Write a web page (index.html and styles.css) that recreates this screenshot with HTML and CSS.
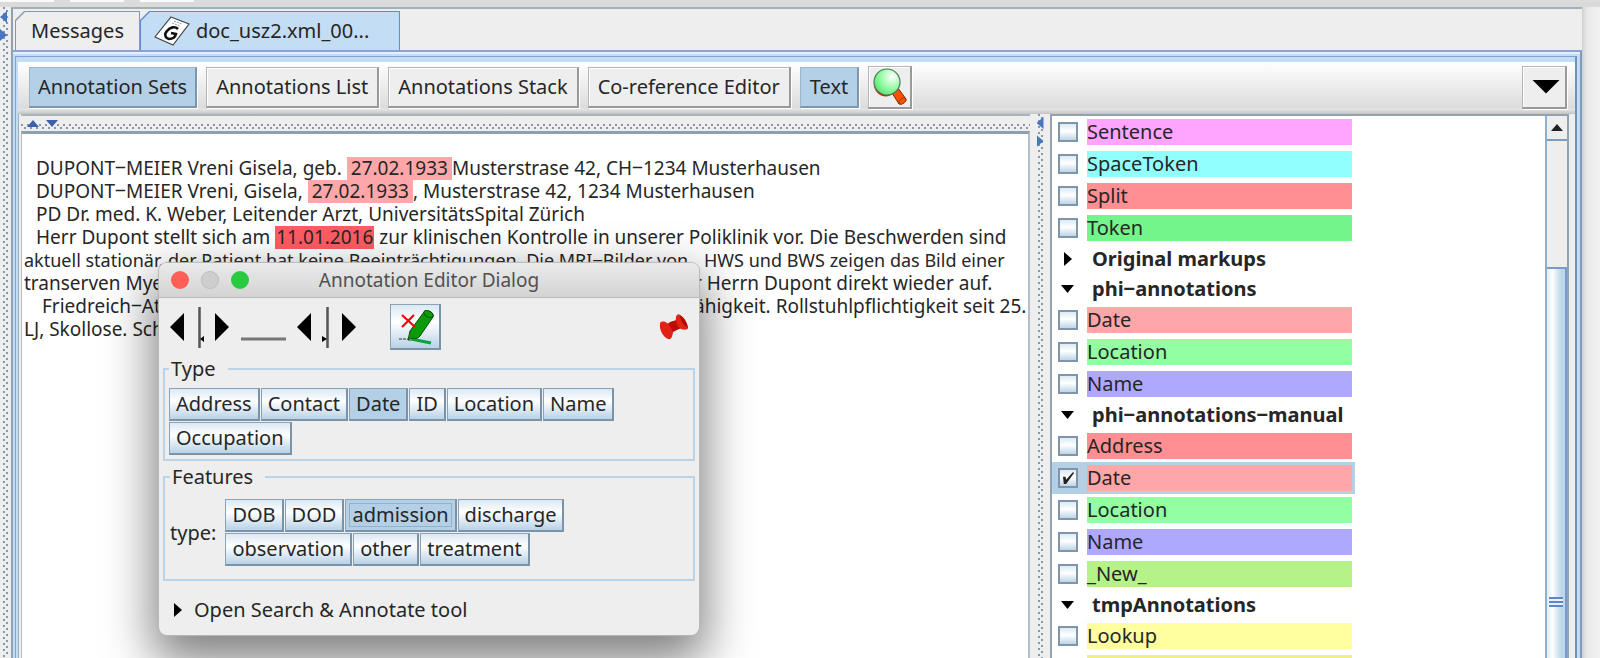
FILE: index.html
```html
<!DOCTYPE html>
<html lang="de">
<head>
<meta charset="utf-8">
<title>Annotation Editor</title>
<link rel="stylesheet" href="styles.css">
</head>
<body>
<div class="app">
  <div class="topstrip"><i></i><i></i><i></i></div>
  <div class="workspace">
    <div class="divider divider-v divider-left"><span class="arr arr-left"></span><span class="arr arr-right"></span></div>
    <main class="main">
      <nav class="tabs">
        <button class="tab" type="button">Messages</button>
        <button class="tab tab-active" type="button">
          <svg class="tab-icon" width="36" height="30" viewBox="0 0 36 30"><path d="M17 1 35 8 19 29 1 21Z" fill="#fff" stroke="#444" stroke-width="1.2"/><path d="m20 5 8 3M18 7l8 3" stroke="#999" stroke-width="1" stroke-dasharray="2 1"/><path d="M24 13c-3-3-8-2-11 2-3 3-2 7 2 8 4 0 6-1 7-5l-5-1" fill="none" stroke="#111" stroke-width="2.6"/></svg>
          doc_usz2.xml_00...
        </button>
      </nav>
      <div class="frame">
        <div class="frame-inner">
          <header class="toolbar">
            <button class="tool tool-on" type="button">Annotation Sets</button>
            <button class="tool" type="button">Annotations List</button>
            <button class="tool" type="button">Annotations Stack</button>
            <button class="tool" type="button">Co-reference Editor</button>
            <button class="tool tool-on" type="button">Text</button>
            <button class="tool tool-icon" type="button" aria-label="Search">
              <svg width="36" height="38" viewBox="0 0 36 38"><defs><radialGradient id="lens" cx=".7" cy=".3" r=".8"><stop offset="0" stop-color="#fff"/><stop offset=".6" stop-color="#8efba0"/><stop offset="1" stop-color="#57e070"/></radialGradient></defs><path d="M2 18c2 10 12 13 19 8l-2-3Z" fill="#d22400"/><path d="m20 25 6-5 8 11c0 3-5 6-7 5Z" fill="#ff5200" stroke="#7a3000" stroke-width="1"/><ellipse cx="30.500" cy="33" rx="4" ry="2.500" transform="rotate(-38 30.500 33)" fill="#ff5200" stroke="#7a3000" stroke-width=".8"/><circle cx="15" cy="14" r="13" fill="url(#lens)" stroke="#4a7a52" stroke-width="1.2"/></svg>
            </button>
            <button class="tool tool-menu" type="button" aria-label="More"><span></span></button>
          </header>
          <div class="content">
            <section class="document">
              <div class="divider divider-h"><span class="arr arr-up"></span><span class="arr arr-down"></span></div>
              <div class="text">
                <p class="in1">DUPONT‒MEIER Vreni Gisela, geb. <mark>27.02.1933</mark>Musterstrase 42, CH‒1234 Musterhausen</p>
                <p class="in1">DUPONT‒MEIER Vreni, Gisela, <mark>27.02.1933</mark>, Musterstrase 42, 1234 Musterhausen</p>
                <p class="in1">PD Dr. med. K. Weber, Leitender Arzt, UniversitätsSpital Zürich</p>
                <p class="in1">Herr Dupont stellt sich am <mark class="current">11.01.2016</mark> zur klinischen Kontrolle in unserer Poliklinik vor. Die Beschwerden sind</p>
                <p class="split dense"><span>aktuell stationär, der Patient hat keine Beeinträchtigungen. Die MRI‒Bilder von</span><span>HWS und BWS zeigen das Bild einer</span></p>
                <p class="split"><span>transerven Mye</span><span>r Herrn Dupont direkt wieder auf.</span></p>
                <p class="split"><span class="in2">Friedreich‒Ata</span><span>ähigkeit. Rollstuhlpflichtigkeit seit 25.</span></p>
                <p>LJ, Skollose. Sch</p>
              </div>
            </section>
            <div class="divider divider-v"><span class="arr arr-left"></span><span class="arr arr-right"></span></div>
            <aside class="sets">
              <div class="list">
                <label class="row"><input type="checkbox"><span class="c-pink">Sentence</span></label>
                <label class="row"><input type="checkbox"><span class="c-cyan">SpaceToken</span></label>
                <label class="row"><input type="checkbox"><span class="c-coral">Split</span></label>
                <label class="row"><input type="checkbox"><span class="c-token">Token</span></label>
                <button class="group closed" type="button">Original markups</button>
                <button class="group" type="button">phi‒annotations</button>
                <label class="row"><input type="checkbox"><span class="c-rose">Date</span></label>
                <label class="row"><input type="checkbox"><span class="c-green">Location</span></label>
                <label class="row"><input type="checkbox"><span class="c-violet">Name</span></label>
                <button class="group" type="button">phi‒annotations‒manual</button>
                <label class="row"><input type="checkbox"><span class="c-coral">Address</span></label>
                <label class="row selected"><input type="checkbox" checked><span class="c-rose">Date</span></label>
                <label class="row"><input type="checkbox"><span class="c-green">Location</span></label>
                <label class="row"><input type="checkbox"><span class="c-violet">Name</span></label>
                <label class="row"><input type="checkbox"><span class="c-lime">_New_</span></label>
                <button class="group" type="button">tmpAnnotations</button>
                <label class="row"><input type="checkbox"><span class="c-yellow">Lookup</span></label>
                <label class="row"><input type="checkbox"><span class="c-olive">SpaceToken</span></label>
              </div>
              <div class="scroll">
                <button class="scroll-up" type="button" aria-label="Scroll up"><span></span></button>
                <div class="track"></div>
                <div class="thumb"><span></span></div>
              </div>
            </aside>
          </div>
        </div>
      </div>
    </main>
    <div class="outside"></div>
  </div>

  <div class="dialog" role="dialog" aria-label="Annotation Editor Dialog">
    <div class="titlebar">
      <div class="lights"><button class="red" type="button" aria-label="Close"></button><button class="grey" type="button" aria-label="Minimise"></button><button class="lime" type="button" aria-label="Zoom"></button></div>
      <h1>Annotation Editor Dialog</h1>
    </div>
    <div class="actions">
      <svg width="196" height="44" viewBox="0 0 196 44">
        <path d="M0 22 14 8V36ZM59 22 45 8V36ZM127 22 141 8V36ZM186 22 172 8V36Z" fill="#000"/>
        <path d="M29.500 2V43M157.500 2V43" stroke="#555" stroke-width="2.500"/>
        <path d="M30 34l4-3v6ZM157 34l-5-3v6Z" fill="#000"/>
        <path d="M71 34H116" stroke="#777" stroke-width="3"/>
      </svg>
      <button class="btn eraser" type="button" aria-label="Delete annotation">
        <svg width="44" height="40" viewBox="0 0 44 40"><path d="M6 32h8l4 2" stroke="#333" fill="none" stroke-dasharray="3 1"/><path d="m18 32 20 4" stroke="#0aa33a" stroke-width="3"/><path d="m15 33 2-9L31 5c3-3 11 1 9 5L27 29c-3 4-7 2-8 2Z" fill="#0a9a0a" stroke="#064d06" stroke-width="1"/><ellipse cx="35.500" cy="7" rx="5" ry="3" transform="rotate(30 35.500 7)" fill="#0a9a0a" stroke="#064d06"/><path d="m9 8 13 12M21 8 9 20" stroke="#f00" stroke-width="2.200"/></svg>
      </button>
      <button class="pin" type="button" aria-label="Pin">
        <svg width="30" height="28" viewBox="0 0 30 28"><path d="M11 9 18 7 22 15 14 18Z" fill="#b00a04"/><path d="M1 11c0-3 4-3 7-1 4 2 7 6 6 10-1 3-1 7-5 6C4 24 0 16 1 11Z" fill="#e02316"/><path d="m9 10 9-3 4 8-8 4Z" fill="#bb0d06"/><path d="M17 4c0-2 3-4 4-2 5 3 7 8 8 13 0 2-4 2-7 1-4-3-6-8-5-12Z" fill="#e02316"/><path d="M21 2c4 3 7 7 8 13-5-3-8-8-8-13Z" fill="#b00a04"/></svg>
      </button>
    </div>
    <fieldset class="type">
      <legend>Type</legend>
      <div class="btns">
        <button class="btn" type="button">Address</button><button class="btn" type="button">Contact</button><button class="btn on" type="button">Date</button><button class="btn" type="button">ID</button><button class="btn" type="button">Location</button><button class="btn" type="button">Name</button><button class="btn" type="button">Occupation</button>
      </div>
    </fieldset>
    <fieldset class="features">
      <legend>Features</legend>
      <span class="flabel">type:</span>
      <div class="btns">
        <button class="btn" type="button">DOB</button><button class="btn" type="button">DOD</button><button class="btn on focus" type="button">admission</button><button class="btn" type="button">discharge</button><button class="btn" type="button">observation</button><button class="btn" type="button">other</button><button class="btn" type="button">treatment</button>
      </div>
    </fieldset>
    <button class="expander" type="button">Open Search &amp; Annotate tool</button>
  </div>
</div>
</body>
</html>
```
FILE: styles.css
```css
* { box-sizing: border-box; }
html, body { height: 100%; margin: 0; }
body { font: 20px/24px "Noto Sans", "Open Sans", sans-serif; color: #262626; background: #eee; overflow: hidden; }
button { font: inherit; color: inherit; padding: 0; border: 0; background: none; white-space: nowrap; }

.app { position: relative; height: 100vh; display: flex; flex-direction: column; }
.topstrip { flex: none; height: 7px; display: flex; gap: 16px; background: #dcdcdc; border-bottom: 5px solid #dadada; }
.topstrip i { width: 54px; background: #fafafa; }
.workspace { flex: 1; min-height: 0; display: flex; }
.main { flex: 1; min-width: 0; display: flex; flex-direction: column; border-top: 2px solid #a3b0b5; border-left: 2px solid #8fa1ae; }
.outside { flex: none; width: 18px; background: linear-gradient(90deg, #cfcfcf, #e9e9e9 5px, #f2f2f2); }

/* Split-pane dividers with the raised dot texture */
.divider { flex: none; display: flex; background-color: #eee; }
.divider-v {
  width: 20px; flex-direction: column; align-items: center; gap: 6px; padding-top: 3px;
  background-image: linear-gradient(#8598a8 2px, transparent 2px), linear-gradient(#8598a8 2px, transparent 2px);
  background-size: 2px 6px; background-position: 8px 0, 11px 3px; background-repeat: repeat-y;
}
.divider-left { width: 11px; padding-top: 4px; background-position: 3px 0, 6px 3px; align-items: flex-start; }
.divider-h {
  height: 17px; align-items: center; gap: 7px; padding-left: 6px;
  background-image: linear-gradient(90deg, #8598a8 2px, transparent 2px), linear-gradient(90deg, #8598a8 2px, transparent 2px);
  background-size: 6px 2px; background-position: 36px 8px, 39px 11px; background-repeat: repeat-x;
  border-top: 2px solid #a9b5bd;
}
.arr { display: block; background: #4a74c4; }
.arr-left { width: 7px; height: 12px; clip-path: polygon(100% 0, 100% 100%, 0 50%); }
.arr-right { width: 7px; height: 12px; clip-path: polygon(0 0, 100% 50%, 0 100%); }
.arr-up { width: 12px; height: 7px; clip-path: polygon(50% 0, 100% 100%, 0 100%); background: #3d5fae; }
.arr-down { width: 12px; height: 7px; clip-path: polygon(0 0, 100% 0, 50% 100%); background: #3d5fae; }

/* Tabs */
.tabs { display: flex; height: 41px; padding: 2px 0 0 2px; flex: none; }
.tab {
  position: relative; isolation: isolate; display: flex; align-items: center; gap: 6px; padding: 0 16px;
  background: #8599ab; clip-path: polygon(9px 0, 100% 0, 100% 100%, 0 100%, 0 9px);
}
.tab::before { content: ""; position: absolute; z-index: -1; inset: 1px 1px 0; background: #eee; clip-path: polygon(9px 0, 100% 0, 100% 100%, 0 100%, 0 9px); }
.tab-active { background: #5f8bd0; min-width: 260px; padding: 0 15px 0 14px; }
.tab-active::before { background: #c3ddf5; }

.frame { flex: 1; min-height: 0; display: flex; padding: 4px 3px 0 2px; background: #c3ddf5; border-top: 2px solid #8aa3d4; border-right: 2px solid #7d9ab8; box-shadow: inset 0 2px #e2eefb; }
.frame-inner { flex: 1; min-width: 0; display: flex; flex-direction: column; padding: 5px 0 0 2px; border: 1px solid #82a2d4; border-bottom: 0; background: #c3ddf5; border-right: 2px solid #6f93b8; }

/* Toolbar */
.toolbar { flex: none; display: flex; align-items: center; gap: 9px; height: 52px; padding: 0 8px 2px 11px; background: linear-gradient(#fff, #dcdcdc 46px, #e6e6e6 47px, #c4c4c4); }
.tool { height: 41px; padding: 0 9px; border: 1px solid #b5b5b5; border-right: 2px solid #999; border-bottom: 2px solid #999; background: #eee; box-shadow: 1px 1px #fff, inset 1px 1px #fff; }
.tool:first-child { padding: 0 8px; }
.tool-on { background: #b3d0e7; border-color: #9db8cc #7a97ae #7a97ae #9db8cc; box-shadow: 1px 1px #fff; }
.tool-icon { width: 44px; height: 43px; padding: 0; display: grid; place-items: center; }
.tool-menu { width: 45px; height: 43px; margin-left: auto; display: grid; place-items: center; }
.tool-menu span { width: 28px; height: 14px; background: #000; clip-path: polygon(0 0, 100% 0, 50% 100%); }

.content { flex: 1; min-height: 0; display: flex; background: #eee; padding-right: 6px; }
.document { flex: 1; min-width: 0; display: flex; flex-direction: column; padding-left: 2px; border-left: 1px solid #9fb0bd; }
.text { flex: 1; padding: 23px 0 0 2px; background: #fff; border: 2px solid #b5bfc7; border-top: 3px solid #8fa0ae; border-bottom: 0; border-left-width: 1px; font-size: 19px; line-height: 23px; white-space: nowrap; overflow: hidden; }
.text p { margin: 0; height: 23px; }
.in1 { padding-left: 12px; }
.in2 { padding-left: 18px; }
mark { display: inline-block; height: 23px; padding: 0 4px; color: inherit; background: #ffa6a9; }
mark.current { padding: 0 1px; background: #ff5c62; }
.split { display: flex; }
.split span:first-child { flex: none; width: 670px; }
.dense { font-size: 18px; }
.dense span:first-child { width: 680px; }

/* Annotation set list */
.sets { flex: none; width: 519px; display: flex; background: #fff; border: 2px solid #8fa3b3; border-bottom: 0; overflow: hidden; }
.list { flex: 1; display: flex; flex-direction: column; align-items: flex-start; }
.row { flex: none; display: flex; align-items: center; gap: 9px; width: 303px; height: 32px; padding: 0 3px 0 6px; }
.row span { flex: 1; height: 26px; line-height: 26px; }
.row.selected { background: #b3d0e7; }
.row input { appearance: none; margin: 0; width: 20px; height: 20px; border: 2px solid #8096a8; background: linear-gradient(#dce9f4, #fff 45%, #bdd5e8); display: grid; place-items: center; }
.row input:checked::after { content: ""; width: 12px; height: 12px; background: #222; clip-path: polygon(8% 40%, 30% 40%, 34% 65%, 92% 0, 100% 8%, 35% 100%, 15% 100%); }
.group { flex: none; display: flex; align-items: center; gap: 18px; height: 30px; padding-left: 9px; font-weight: 700; }
.group::before { content: ""; width: 13px; height: 8px; background: #000; clip-path: polygon(0 0, 100% 0, 50% 100%); }
.closed { padding-left: 12px; gap: 20px; }
.closed::before { width: 8px; height: 14px; clip-path: polygon(0 0, 100% 50%, 0 100%); }
.c-pink { background: #ffa5ff; }
.c-cyan { background: #92ffff; }
.c-coral { background: #ff8f92; }
.c-token { background: #74f58b; }
.c-rose { background: #ffa6a9; }
.c-green { background: #91ffa2; }
.c-violet { background: #aea9ff; }
.c-lime { background: #b5f388; }
.c-yellow { background: #ffff9f; }
.c-olive { background: #efef86; }

.scroll { width: 22px; display: flex; flex-direction: column; border-left: 2px solid #8fb0cc; background: #eee; }
.scroll-up { height: 25px; display: grid; place-items: center; border-bottom: 2px solid #7f9db8; background: #eee; }
.scroll-up span { width: 12px; height: 7px; background: #222; clip-path: polygon(50% 0, 100% 100%, 0 100%); }
.track { flex: 1 1 126px; max-height: 126px; }
.thumb { flex: 1 1 380px; padding-top: 328px; border: 2px solid #7a9acb; border-bottom: 0; border-left: 0; background: linear-gradient(90deg, #dfebf6, #fff 30%, #bcd6ea 80%); }
.thumb span { display: block; width: 14px; height: 10px; margin: 0 auto; background: repeating-linear-gradient(#5f86c8 0 2px, #e8f1fa 2px 4px); }

/* Floating annotation editor */
.dialog { position: absolute; left: 159px; top: 263px; width: 540px; padding-bottom: 13px; display: flex; flex-direction: column; border-radius: 8px; background: #eee; box-shadow: 0 0 1px 1px #b8b8b8, 0 20px 48px 6px rgba(0, 0, 0, .5); }
.titlebar { position: relative; height: 35px; display: flex; align-items: center; justify-content: center; border-radius: 8px 8px 0 0; border-bottom: 1px solid #bcbcbc; background: linear-gradient(#ebebeb, #d3d3d3); }
.titlebar h1 { margin: 0; font-size: 19px; font-weight: 400; color: #505050; }
.lights { position: absolute; left: 12px; top: 8px; display: flex; gap: 12px; }
.lights button { width: 18px; height: 18px; border-radius: 50%; }
.red { background: #ff5f57; }
.grey { background: #cecece; box-shadow: inset 0 0 0 1px #bfbfbf; }
.lime { background: #28cb40; }
.actions { display: flex; align-items: center; padding: 6px 10px 0 11px; }
.btn { height: 33px; padding: 0 6px; border: 1px solid #8ca2b5; border-right: 2px solid #7b93a8; border-bottom: 2px solid #7b93a8; background: linear-gradient(#dbe8f3, #fff 40%, #b8d2e7); }
.btn.on { background: #b3d0e7; }
.btn.focus { box-shadow: inset 0 0 0 3px #b3d0e7, inset 0 0 0 4px #93b1cc; }
.eraser { width: 51px; height: 46px; padding: 0; margin-left: 24px; }
.eraser svg, .pin svg { display: block; margin: auto; }
.pin { margin-left: auto; }
fieldset { margin: 0 4px; min-width: 0; border: 2px solid #b9d3e8; }
legend { padding: 0 12px 0 2px; line-height: 24px; }
.type { margin-top: 7px; padding: 7px 60px 4px 4px; }
.features { margin-top: 4px; padding: 10px 80px 13px 5px; display: flex; align-items: center; gap: 9px; }
.btns { display: flex; flex-wrap: wrap; gap: 1px; }
.features .btns { width: 350px; }
.expander { align-self: flex-start; display: flex; align-items: center; gap: 12px; margin: 17px 0 0 15px; }
.expander::before { content: ""; width: 8px; height: 14px; background: #000; clip-path: polygon(0 0, 100% 50%, 0 100%); }
```
